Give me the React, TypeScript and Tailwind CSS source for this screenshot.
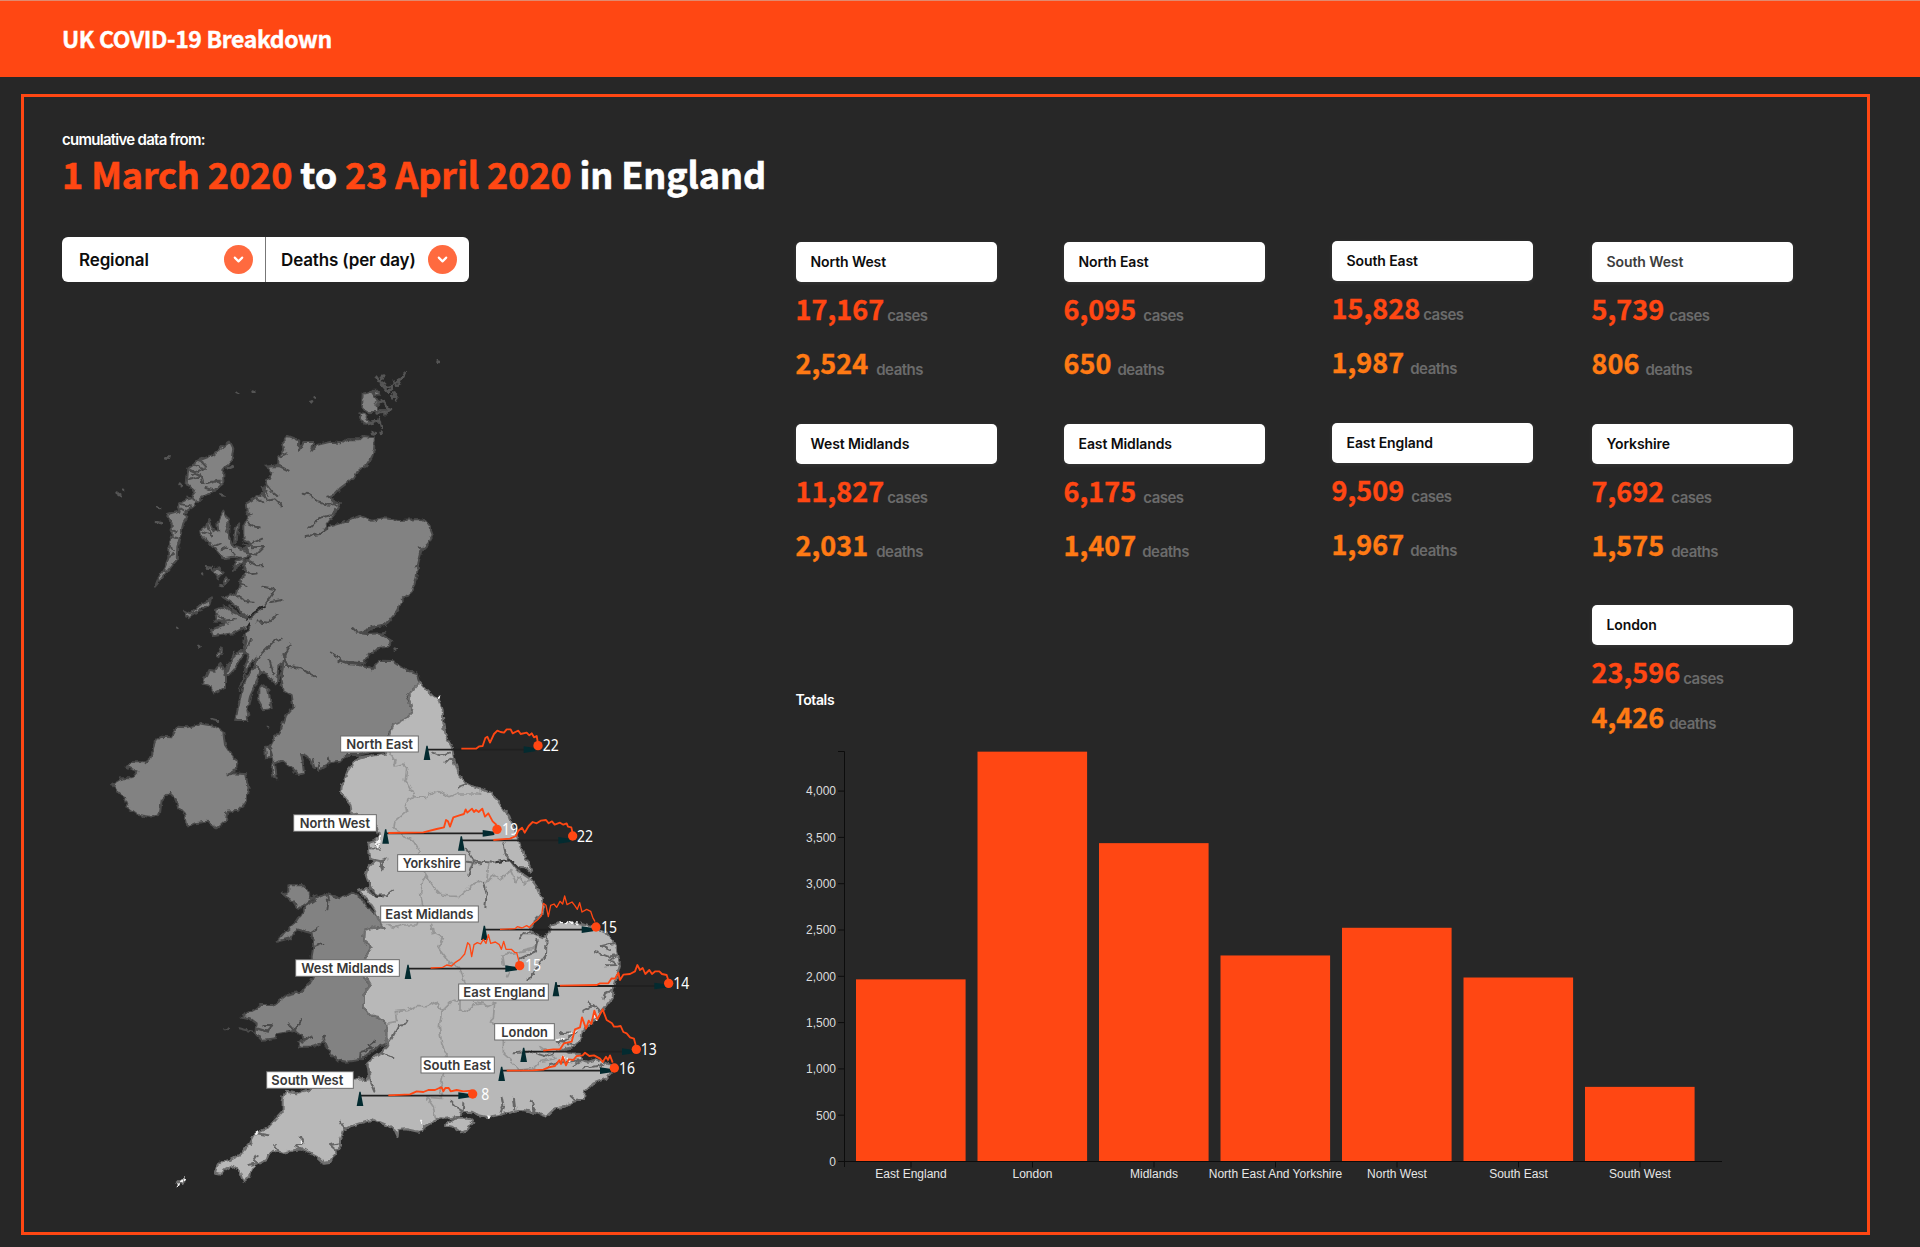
import React from "react";
import { ChevronDown } from "lucide-react";

/* ---------- map geometry: three drawing units to one pixel ---------- */

type Seg = [number, number, string];

function toPath(segments: Seg[], closed = true) {
  const out: string[] = [];
  for (const [dx, dy, text] of segments) {
    for (const pair of text.trim().split(/\s+/)) {
      const [x, y] = pair.split(",").map(Number);
      out.push(`${x + dx},${y + dy}`);
    }
  }
  return "M" + out.join("L") + (closed ? "Z" : "");
}

const scotland = toPath([
  [0, 0, "565,258 585,265 598,272 596,302 610,276 642,276 634,304 650,285 690,275 720,280 740,268 780,268 790,258 825,262 822,300 815,325 800,348 775,360 765,380 740,400 720,415 705,432 685,440 700,452 720,460 705,490 680,525 660,552 690,530 740,515 780,497 815,512 850,505 900,510 960,507 985,520 998,555 985,580 965,600 955,640 950,680 935,725 905,750 895,780 860,822 820,830 780,850 800,852 840,850 878,875 860,890"],
  [0, 750, "835,145 805,165 790,190 740,185 715,183 740,192 780,195 815,208 840,182 880,183 920,210 950,220 960,250 920,290 940,335 915,360 880,375 868,400 850,440 780,465 740,465 720,485 690,490 660,508 640,500 625,470 605,462 612,520 595,525 570,500 545,480 525,490 530,535 520,530 515,505 520,480 510,445 512,475 498,475 495,440 510,440 520,420 540,395 555,350 580,320 575,285 550,270 545,240 548,190 535,200 530,255 500,222 480,215 470,245 450,290 442,330 445,345 440,360 405,360 415,320 425,270 440,230 465,200 470,170 455,190 430,215 445,170 432,150 440,120"],
  [0, 0, "435,850 450,828 430,835 400,850 340,858 333,840 380,820 350,812 345,780 375,768 395,785 440,805 410,770 370,742 410,730 420,700 440,665 430,640 455,620 430,600 455,580 430,565 430,530 445,500 440,460 470,440 490,430 500,395 515,370 500,350 535,345 535,320 550,300 545,280"],
]);

const islands = [
  toPath([[0, 0, "370,482 385,510 385,560 400,590 440,600 455,612 430,625 400,620 370,625 350,600 325,580 303,555 300,540 318,530 325,510 340,540 355,545 352,520 360,500"]]),
  toPath([[0, 0, "390,275 400,295 395,330 370,360 370,400 340,425 310,440 280,470 250,490 262,500 250,520 240,560 232,590 230,630 205,660 190,680 165,710 175,685 195,650 205,625 205,590 215,560 215,520 200,495 235,485 240,460 270,445 285,425 260,400 265,355 300,330 340,315 370,290"]]),
  toPath([[0, 0, "338,660 355,652 368,670 355,685"]]),
  toPath([[0, 0, "370,692 378,682 384,692 374,704"]]),
  toPath([[0, 0, "398,660 410,632 438,622 425,640"]]),
  toPath([[0, 0, "252,782 270,790 300,765 333,745 325,770 290,785 262,803"]]),
  toPath([[0, 0, "402,580 408,530 418,520 410,570"]]),
  toPath([[0, 750, "307,250 325,210 345,212 360,190 378,220 378,262 342,280 335,262 315,256"]]),
  toPath([[0, 750, "373,225 385,190 425,150 435,155 402,210 385,228"]]),
  toPath([[0, 750, "350,168 362,145 368,148 358,172"]]),
  toPath([[0, 750, "475,265 490,256 505,270 515,325 490,328 475,300"]]),
  toPath([[0, 0, "788,132 815,125 832,150 835,185 800,187 786,170"]]),
  toPath([[0, 0, "778,190 795,195 812,218 795,225 782,205"]]),
  toPath([[0, 0, "818,122 835,122 838,134 826,132"]]),
  toPath([[0, 0, "842,180 858,180 862,192 850,194"]]),
];

const islets = [
  "M828,80l12,16l10,-22M836,92l16,10M880,95l14,12l20,-38M884,100l14,-12M846,104l20,24l12,-20M858,112l14,-4M880,130l12,14l-4,10M874,142l14,-4M842,150l14,10l10,22l10,-8M828,160l24,-4M830,190l30,-4M836,205l8,28M828,214l12,0M800,222l26,-6M815,248l10,2M842,248l3,1",
  "M1010,34l8,2M410,126l5,2M455,122l5,2M644,141l2,2M631,156l2,1M196,322l12,1M50,428l14,10M70,418l2,2M172,472l8,2M168,516l18,4M238,404l6,2M362,434l8,2M386,354l14,-6M230,834l2,2M295,888l3,2M362,706l6,2M304,671l2,1M318,652l18,2",
  "M335,1108l16,4M504,1128l3,1M884,896l3,2",
];

const lochs = [
  "M608,428l24,6l20,22l34,8l20,-2M720,460l-24,34l-38,10l-30,30M620,558l40,-6M690,440l16,24",
  "M490,710l38,8l-34,48l-44,40l-48,-22l-14,-18M545,750l-32,6M530,792l-24,26l-36,-4",
  "M758,834l14,14l30,-2l24,-16l34,-6M838,852l18,-4",
  "M692,908l24,14l10,14l34,2M648,980l-50,-26l-40,-8M545,866l-26,10l-34,34l-16,30l14,30M572,884l-18,30l-8,50l-16,34M550,912l14,40M508,930l12,40",
  "M430,580l26,12l30,-2M430,604l40,10l20,-20M440,630l30,16l20,0M430,655l24,20l16,-2M455,580l32,-14M445,520l20,10l14,2M470,445l20,14M486,432l18,20l20,-4l20,18M496,400l20,26l16,12M488,410l16,24M504,350l34,-2l28,14M536,322l24,-12M440,490l18,2M410,735l24,18l28,2M420,700l20,8",
  "M440,840l-10,50M452,870l-14,28M404,905l-22,60M440,960l-24,60M350,790l24,22l34,-4M345,815l36,-2M966,600l-8,-8M950,650l4,6M603,1212l6,22M640,1230l6,24M660,1236l-6,24M686,1222l4,18",
  "M270,360l30,14l8,26M264,390l36,-10M284,345l34,12M276,372l34,-16M320,400l30,-10l14,14M316,414l30,8M330,392l32,0M300,330l18,20M250,480l-16,-10M244,462l30,8M262,440l26,12M216,540l14,6M212,560l20,4M208,590l14,10M206,618l16,-6M190,662l16,4M322,520l14,40M310,545l26,12M340,590l22,-10M365,600l18,-8M386,525l-8,20M390,600l14,14",
];

const ireland = toPath([
  [0, 750, "36,552 65,535 95,535 112,515 80,500 95,487 135,487 155,470 165,420 185,410 215,412 232,380 260,382 300,370 345,378 370,395 375,435 395,465 413,490 405,510 380,527 398,520 435,522 447,570 440,605 415,632 382,635 378,660 350,685 320,665 285,670 262,680 255,640 235,620 225,595 208,578 185,600 180,640 150,650 115,645 80,620 75,595 55,580"],
]);

const wales = toPath([
  [180, 1530, "420,170 440,135 470,115 500,102 540,115 580,97 600,110 620,140 645,160 665,185 672,207 640,203 612,210 610,240 635,260 615,295 610,340 630,375 612,400 612,440 630,465 660,472 680,490 680,550 640,570 600,600 560,605 530,600 510,580 495,545 460,560 420,560 415,545 440,540 400,510 350,520 345,535 305,540 285,520 290,490 270,475 245,470 290,445 300,435 340,435 380,405 420,395 450,370 460,345 455,290 460,260 455,220 410,208 390,235 350,245 375,215 410,185"],
]);

const anglesey = toPath([
  [180, 1530, "368,102 385,95 385,76 430,75 445,95 450,112 470,106 440,130 415,148 400,125 385,115"],
]);

const england = toPath([
  [480, 990, "481,6 500,30 520,50 540,62 548,90 550,130 558,170 575,200 583,240 597,285 620,312 660,325 690,338 712,360 728,385 748,408 760,440 775,480 790,520 805,545 817,572 808,575 795,562 770,560 750,540 770,570 800,590 815,600 830,620 843,650 852,680 848,700 825,722 812,750"],
  [900, 1470, "392,262 400,280 430,292 445,280 452,258 480,248 540,250 580,262 620,280 645,310 655,345 660,375 650,410 640,450 638,475 615,505 595,530 570,552 545,575 540,600 515,622"],
  [1020, 1950, "370,148 395,160 420,162 425,180 445,185 470,178 500,190 515,196 520,208 500,235 460,250 435,275 432,298 400,305 375,320 345,325 318,350 290,340 250,330 200,340 145,352 115,345 95,335 68,337 55,350 20,356"],
  [180, 1530, "840,775 820,785 795,800 790,812 775,815 740,808 715,810 713,830 705,812 680,795 640,778 600,790 570,800 550,810 540,840 540,860 525,880 512,905 490,908 470,890 450,880 430,868 405,870 370,878 340,872 325,885 320,900 290,915 275,925 270,950 250,965 240,935 215,918 195,930 185,942 165,938 172,915 190,903 210,900 240,885 255,865 270,850 285,822 325,802 340,785 368,755 368,720 375,695 410,700 440,690 480,680 540,672 600,655 618,660 632,640 622,615 635,595 665,575 680,560 680,525 680,490 660,472 630,465 612,440 612,400 630,375 610,340 615,295 635,260 610,240 612,210 640,203 672,207 655,180 645,150 625,120 597,92 620,84 640,108 630,80 617,45"],
  [480, 990, "325,560 345,540 330,535 325,485 345,480 358,470 350,440 330,410 300,405 275,398 270,370 243,340 245,320 265,270 285,240 330,228 375,222 388,200 388,165 400,135 440,115 460,95 443,50"],
]);

const wight = toPath([[1020, 1950, "15,375 45,356 88,356 100,368 80,392 62,397 40,380"]]);

const borders = [
  toPath([[480, 990, "388,215 405,240 402,258 432,252 440,268 436,300 447,318 462,350 500,352 508,344 535,335 570,350 590,342 662,342 660,325"]], false),
  toPath([[480, 990, "462,350 435,368 440,395 405,425 402,445 418,455 440,475 460,480 480,515 470,540 500,590 520,620 545,645 570,648 600,650 620,632 650,605 680,605 700,585 720,600 752,572 768,608 778,590 795,612 815,590"]], false),
  toPath([[480, 990, "500,590 488,600 482,640 490,690 470,735 430,735 405,742 380,735"]], false),
  toPath([[480, 990, "680,605 686,555 690,545"]], false),
  toPath([[180, 1530, "815,190 820,220 850,235 835,262 870,308 900,325 915,370 900,400 900,450 920,455 940,435 965,432"]], false),
  toPath([[180, 1530, "680,490 710,484 706,455 740,452 760,440 800,440 830,425 845,455 880,420 900,425"]], false),
  toPath([[180, 1530, "845,455 838,500 845,550 860,590 850,640 840,690 848,715 800,712 820,740 826,775"]], false),
  toPath([[900, 1470, "220,485 250,490 262,500 284,490 280,535 270,545 300,560 310,600 310,640 345,672 355,690 400,685 420,665 465,655 450,640 420,620"]], false),
  toPath([[900, 1470, "415,300 400,325 360,335 305,345 310,375 330,385 320,410"]], false),
];

const rivers = [
  toPath([[480, 990, "617,505 640,540 665,545 700,548 750,540 775,565"]], false),
  toPath([[480, 990, "640,545 625,585"]], false),
  toPath([[480, 990, "620,545 660,550"]], false),
  toPath([[480, 990, "730,490 738,525 755,545"]], false),
  toPath([[480, 990, "672,608 680,640 676,684"]], false),
  toPath([[480, 990, "517,218 540,226 570,218"]], false),
  toPath([[480, 990, "555,248 568,236 582,238"]], false),
  toPath([[480, 990, "620,312 598,320 592,326"]], false),
  toPath([[480, 990, "285,240 300,232 335,226"]], false),
  toPath([[480, 990, "328,610 345,648 380,645 397,632"]], false),
  toPath([[480, 990, "345,540 370,545 368,568 358,545 382,538"]], false),
  toPath([[480, 990, "330,505 358,506 350,492"]], false),
  toPath([[900, 1470, "400,280 370,280 358,298"]], false),
  toPath([[900, 1470, "440,290 438,345 400,400 385,418"]], false),
  toPath([[900, 1470, "412,300 405,335 360,356"]], false),
  toPath([[900, 1470, "585,335 625,350 652,345 630,360 650,375 615,376"]], false),
  toPath([[900, 1470, "640,310 605,318 630,330"]], false),
  toPath([[900, 1470, "550,512 580,495 600,515 565,485"]], false),
  toPath([[900, 1470, "635,450 615,460 610,480"]], false),
  toPath([[900, 1470, "480,580 530,575 500,600 470,605 520,612"]], false),
  toPath([[900, 1470, "340,640 390,635 440,650 475,632 510,628"]], false),
  toPath([[900, 1470, "450,675 500,665 545,660 520,678"]], false),
  toPath([[900, 1470, "550,685 610,675"]], false),
  toPath([[180, 1530, "745,482 735,495 715,498 690,545 665,578 697,594"]], false),
  toPath([[180, 1530, "622,615 630,665 643,695"]], false),
  toPath([[180, 1530, "540,782 552,805 575,795"]], false),
  toPath([[180, 1530, "540,850 510,855 530,872"]], false),
  toPath([[180, 1530, "422,830 430,850 405,858 425,870"]], false),
  toPath([[180, 1530, "290,885 280,900 295,910 265,915"]], false),
  toPath([[180, 1530, "290,820 325,826"]], false),
  toPath([[180, 1530, "345,855 355,872"]], false),
  toPath([[1020, 1950, "30,305 50,325 68,335 70,310"]], false),
  toPath([[1020, 1950, "62,345 15,374"]], false),
  toPath([[1020, 1950, "185,290 190,315 182,338"]], false),
  toPath([[1020, 1950, "222,296 226,328"]], false),
  toPath([[1020, 1950, "275,305 282,325 278,338 298,342"]], false),
  toPath([[1020, 1950, "392,288 405,300 430,298"]], false),
];

const welshInlets = [
  toPath([[180, 1530, "500,102 505,125 502,148"]], false),
  toPath([[180, 1530, "455,215 475,202"]], false),
  toPath([[180, 1530, "458,262 487,250"]], false),
  toPath([[180, 1530, "385,490 405,512 425,480"]], false),
  toPath([[180, 1530, "290,505 325,515 335,495 310,495"]], false),
  toPath([[180, 1530, "600,600 602,575 640,565 628,555 645,542"]], false),
  toPath([[180, 1530, "430,545 455,530"]], false),
  toPath([[180, 1530, "195,508 202,508"]], false),
  toPath([[180, 1530, "238,505 280,515"]], false),
  toPath([[180, 1530, "485,545 495,530"]], false),
];

const shoals = [
  toPath([[900, 1470, "480,247 500,250 515,247 540,252"]], false),
  toPath([[480, 990, "536,54 545,46"]], false),
  toPath([[480, 990, "350,490 358,470 352,510"]], false),
  toPath([[900, 1470, "470,600 485,596 500,598"]], false),
  toPath([[900, 1470, "510,582 530,572"]], false),
  toPath([[900, 1470, "488,652 510,662"]], false),
  toPath([[900, 1470, "582,525 590,540"]], false),
  toPath([[180, 1530, "50,978 60,965 75,955"]], false),
  toPath([[180, 1530, "422,842 428,850"]], false),
  toPath([[180, 1530, "288,822 294,816"]], false),
  toPath([[180, 1530, "780,782 786,790"]], false),
  toPath([[1020, 1950, "145,348 150,354"]], false),
];

type Trend = {
  name: string;
  value: string;
  origin: [number, number];
  box: [number, number, number, number];
  text: [number, number];
  axis: [number, number, number];
  dotY: number;
  valueX: number;
  line: string;
  thin?: boolean;
};

const trends: Trend[] = [
  { name: "North East", value: "22", origin: [480, 990], box: [241, 167, 235, 50], text: [259, 200], axis: [501, 834, 209], dotY: 197, valueX: 848, line: "604,206 648,206 658,199 668,198 676,174 682,170 690,188 702,162 712,152 722,156 732,158 740,148 752,148 758,160 766,156 775,152 782,162 800,158 808,166 815,160 822,172 830,168 834,190" },
  { name: "North West", value: "19", origin: [480, 990], box: [100, 403, 250, 52], text: [119, 211], axis: [377, 711, 460], dotY: 448, valueX: 726, line: "385,459 490,457 530,447 552,442 558,420 564,424 570,440 580,412 598,406 612,402 617,388 622,398 636,386 642,396 648,390 656,396 667,386 675,410 685,400 698,424 710,435" },
  { name: "Yorkshire", value: "22", origin: [480, 990], box: [412, 523, 205, 52], text: [428, 174], axis: [604, 938, 481], dotY: 468, valueX: 951, line: "700,480 750,476 768,468 775,452 786,443 794,458 806,438 818,426 830,430 842,422 858,420 866,430 876,424 884,434 900,428 910,434 920,430 924,440 934,442 938,460" },
  { name: "East Midlands", value: "15", origin: [900, 1470], box: [-59, 197, 295, 50], text: [-44, 264], axis: [253, 588, 269], dotY: 261, valueX: 603, line: "300,268 345,266 352,260 366,264 380,257 388,262 400,250 412,240 425,225 430,190 438,196 445,230 452,196 462,192 470,202 480,184 488,192 494,168 501,194 516,186 524,196 532,208 539,188 546,216 560,208 572,214 578,232 585,245", thin: true },
  { name: "West Midlands", value: "15", origin: [900, 1470], box: [-314, 358, 313, 52], text: [-296, 277], axis: [24, 359, 386], dotY: 377, valueX: 375, line: "92,384 128,382 140,375 155,378 165,368 180,358 194,342 203,308 209,314 215,350 222,314 232,308 242,312 250,298 258,310 265,284 272,310 286,306 298,314 304,328 311,304 318,328 334,328 345,338 350,338 358,368", thin: true },
  { name: "East England", value: "14", origin: [900, 1470], box: [175, 431, 271, 50], text: [190, 246], axis: [468, 806, 438], dotY: 430, valueX: 820, line: "480,437 590,435 600,430 625,430 635,415 645,416 655,398 660,420 670,404 690,402 705,394 712,375 720,390 728,384 736,402 748,390 756,402 766,394 778,394 786,402 800,405 804,418" },
  { name: "London", value: "13", origin: [900, 1470], box: [283, 550, 181, 51], text: [304, 140], axis: [371, 709, 635], dotY: 628, valueX: 722, line: "430,632 460,628 480,628 492,610 515,605 525,568 540,562 546,532 558,566 566,542 574,552 583,512 592,538 608,508 620,540 636,550 642,560 652,560 662,558 670,576 680,580 690,592 702,596 707,615" },
  { name: "South East", value: "16", origin: [900, 1470], box: [62, 650, 222, 50], text: [69, 204], axis: [305, 643, 692], dotY: 684, valueX: 657, line: "320,692 400,691 430,689 446,682 465,678 478,660 483,672 488,650 498,676 506,658 520,660 530,648 548,646 555,638 568,648 582,646 600,656 608,666 618,650 624,660 630,646 638,668" },
  { name: "South West", value: "8", origin: [180, 1530], box: [319, 634, 262, 52], text: [334, 216], axis: [600, 938, 707], dotY: 702, valueX: 964, line: "685,706 750,703 770,694 790,696 805,690 825,690 838,684 845,682 850,694 856,684 866,684 872,694 890,690 910,694 935,692" },
];

function TrendLine({ t }: { t: Trend }) {
  const [x1, x2, y] = t.axis;
  const pts = t.line.split(" ").join("L");
  return (
    <g transform={`translate(${t.origin[0]} ${t.origin[1]})`}>
      <path d={`M${x1},${y}H${x2 - 20}`} stroke="#202020" strokeWidth="5.5" fill="none" />
      <path d={`M${x2 - 43},${y - 10}L${x2 - 8},${y - 5}V${y + 5}L${x2 - 43},${y + 10}Z`} fill="#032b30" />
      <path d={`M${x1 - 2},${y - 12}h4l8,43h-20Z`} fill="#032b30" />
      <path d={`M${pts}`} fill="none" stroke="#ff4713" strokeWidth={t.thin ? 4 : 5.5} strokeLinejoin="round" />
      <circle cx={x2} cy={t.dotY} r="14" fill="#ff4713" />
      <text x={t.valueX} y={t.dotY + 17} fontSize="46" fill="#fff" className="font-['Noto_Sans']" textLength={t.value.length * 24} lengthAdjust="spacingAndGlyphs">
        {t.value}
      </text>
    </g>
  );
}

function TrendLabel({ t }: { t: Trend }) {
  const [x, y, w, h] = t.box;
  return (
    <g transform={`translate(${t.origin[0]} ${t.origin[1]})`}>
      <rect x={x + 1} y={y + 1} width={w - 2} height={h - 2} fill="#fff" stroke="#6b6b6b" strokeWidth="3" />
      <text x={t.text[0]} y={y + 40} fontSize="41" fill="#383838" className="font-['Inter'] font-semibold" textLength={t.text[1]} lengthAdjust="spacingAndGlyphs">
        {t.name}
      </text>
    </g>
  );
}

function RegionMap() {
  return (
    <svg viewBox="0 0 1800 2550" className="ml-[38px] mt-[68px] block h-[850px] w-[600px] shrink-0">
      <defs>
        <filter id="coast" x="-2%" y="-2%" width="104%" height="104%" colorInterpolationFilters="sRGB">
          <feTurbulence type="fractalNoise" baseFrequency="0.06" numOctaves="2" seed="4" result="n" />
          <feDisplacementMap in="SourceGraphic" in2="n" scale="15" xChannelSelector="R" yChannelSelector="G" />
        </filter>
      </defs>
      <g filter="url(#coast)" strokeLinejoin="round" strokeLinecap="round" strokeWidth="6">
        <g fill="#828282" stroke="#4a4a4a">
          <path d={scotland} />
          {islands.map((d) => <path key={d} d={d} />)}
          <path d={ireland} />
          <path d={wales} />
          <path d={anglesey} />
        </g>
        <g fill="none" stroke="#4c4c4c">
          {lochs.map((d) => <path key={d} d={d} />)}
          {welshInlets.map((d) => <path key={d} d={d} />)}
        </g>
        <g fill="none" stroke="#555" strokeWidth="8">
          {islets.map((d) => <path key={d} d={d} />)}
        </g>
        <path d="M440,812L460,790L490,770M432,850L450,820" fill="none" stroke="#272727" strokeWidth="6" />
        <g fill="#b8b8b8" stroke="#6f6f6f">
          <path d={england} />
          <path d={wight} />
          <path d="M232,2498l8,-8l16,0l-8,12z" />
        </g>
        <g fill="none" stroke="#969696" strokeWidth="5">
          {borders.map((d) => <path key={d} d={d} />)}
        </g>
        <g fill="none" stroke="#666">
          {rivers.map((d) => <path key={d} d={d} />)}
        </g>
        <path d="M1190,1536L1230,1530L1256,1556M812,1622L828,1640L848,1640" fill="none" stroke="#3a3a3a" strokeWidth="6" />
        <g fill="none" stroke="#f4f4f4" strokeWidth="6" strokeDasharray="6 10">
          {shoals.map((d) => <path key={d} d={d} />)}
        </g>
      </g>
      {trends.map((t) => <TrendLine key={t.name} t={t} />)}
      {trends.map((t) => <TrendLabel key={t.name} t={t} />)}
    </svg>
  );
}

/* ---------- figures ---------- */

type Region = {
  name: string;
  cases: string;
  deaths: string;
  casesGap: string;
  deathsGap: string;
  soft?: boolean;
  tight?: boolean;
};

const columns: { box: string; items: Region[] }[] = [
  { box: "w-[268px] pt-[5px]", items: [
    { name: "North West", cases: "17,167", deaths: "2,524", casesGap: "ml-[3px]", deathsGap: "ml-[8px]" },
    { name: "West Midlands", cases: "11,827", deaths: "2,031", casesGap: "ml-[3px]", deathsGap: "ml-[8px]" },
  ] },
  { box: "w-[268px] pt-[5px]", items: [
    { name: "North East", cases: "6,095", deaths: "650", casesGap: "ml-[7px]", deathsGap: "ml-[6px]" },
    { name: "East Midlands", cases: "6,175", deaths: "1,407", casesGap: "ml-[7px]", deathsGap: "ml-[6px]" },
  ] },
  { box: "w-[260px] pt-[4px]", items: [
    { name: "South East", cases: "15,828", deaths: "1,987", casesGap: "ml-[3px]", deathsGap: "ml-[6px]" },
    { name: "East England", cases: "9,509", deaths: "1,967", casesGap: "ml-[7px]", deathsGap: "ml-[6px]" },
  ] },
  { box: "w-[202px] pt-[5px]", items: [
    { name: "South West", cases: "5,739", deaths: "806", casesGap: "ml-[5px]", deathsGap: "ml-[6px]", soft: true },
    { name: "Yorkshire", cases: "7,692", deaths: "1,575", casesGap: "ml-[7px]", deathsGap: "ml-[7px]" },
    { name: "London", cases: "23,596", deaths: "4,426", casesGap: "ml-[3px]", deathsGap: "ml-[5px]", tight: true },
  ] },
];

function Figure({ value, unit, gap, tone }: { value: string; unit: string; gap: string; tone: string }) {
  return (
    <div className="flex h-[36px] items-start leading-[36px]">
      <span className={`font-['Noto_Sans_CJK_SC'] text-[27px] font-bold tracking-[0.05px] [-webkit-text-stroke:0.4px_currentColor] ${tone}`}>{value}</span>
      <span className={`mt-[7px] font-['Inter'] text-[15px] font-semibold tracking-[-0.5px] text-[#6b6b6b] ${gap}`}>{unit}</span>
    </div>
  );
}

function RegionCard({ r }: { r: Region }) {
  return (
    <div className="h-[181.7px]">
      <div className={`flex h-[40px] w-[201px] items-center rounded-[5px] bg-white pb-px pl-[15px] font-['Inter'] text-[14px] font-semibold tracking-[-0.1px] shadow-[0_1px_4px_rgba(255,255,255,0.08)] ${r.soft ? "text-[#3d3d3d]" : "text-[#0d0d0d]"}`}>
        {r.name}
      </div>
      <div className="mt-[9px]">
        <Figure value={r.cases} unit="cases" gap={r.casesGap} tone="text-[#ff4713]" />
      </div>
      <div className={r.tight ? "mt-[9px]" : "mt-[18px]"}>
        <Figure value={r.deaths} unit="deaths" gap={r.deathsGap} tone="text-[#ff7a14]" />
      </div>
    </div>
  );
}

/* ---------- bar chart ---------- */

const bars = [
  { name: "East England", value: 1967 },
  { name: "London", value: 4426 },
  { name: "Midlands", value: 3438 },
  { name: "North East And Yorkshire", value: 2225 },
  { name: "North West", value: 2524 },
  { name: "South East", value: 1987 },
  { name: "South West", value: 806 },
];
const ticks = [0, 500, 1000, 1500, 2000, 2500, 3000, 3500, 4000];
const yOf = (v: number) => 421.5 - v * 0.0926;

function TotalsChart() {
  return (
    <svg width="940" height="450" className="block font-['Liberation_Sans'] text-[12px]">
      {bars.map((b, i) => (
        <g key={b.name}>
          <rect x={60 + i * 121.5} y={yOf(b.value)} width="109.6" height={421.5 - yOf(b.value)} fill="#ff4713" />
          <path d={`M${115 + i * 121.5},421.5v6`} stroke="#0c0c0c" />
          <text x={115 + i * 121.5} y="438" textAnchor="middle" fill="#e6e6e6">{b.name}</text>
        </g>
      ))}
      {ticks.map((v) => (
        <g key={v}>
          <path d={`M42,${yOf(v)}h6`} stroke="#0c0c0c" />
          <text x="40" y={yOf(v) + 4.3} textAnchor="end" fill="#dcdcdc">{v.toLocaleString("en-GB")}</text>
        </g>
      ))}
      <path d="M42,11.5h6.5V427" fill="none" stroke="#0c0c0c" />
      <path d="M42,421.5H926" fill="none" stroke="#0c0c0c" />
    </svg>
  );
}

function Picker({ label, className }: { label: string; className: string }) {
  return (
    <button className={`flex h-full items-center justify-between ${className}`}>
      <span className="pt-[2px]">{label}</span>
      <span className="flex h-[29px] w-[29px] items-center justify-center rounded-full bg-[#ff6a3f] text-white">
        <ChevronDown size={15} strokeWidth={3.4} />
      </span>
    </button>
  );
}

export default function App() {
  return (
    <div className="h-[1247px] w-[1920px] overflow-hidden bg-[#272727]">
      <header className="flex h-[77px] items-center border-t border-[#e08a70] bg-[#ff4713] pb-[2px] pl-[62px]">
        <h1 className="font-['Noto_Sans_CJK_SC'] text-[23px] font-bold tracking-[-0.38px] text-white [-webkit-text-stroke:0.4px_currentColor]">UK COVID-19 Breakdown</h1>
      </header>

      <main className="ml-[21px] mt-[17px] h-[1141px] w-[1849px] border-[3px] border-[#ff4713] pl-[38px]">
        <p className="mt-[33px] h-[20px] font-['Inter'] text-[15px] font-semibold leading-[20px] tracking-[-0.73px] text-white">cumulative data from:</p>
        <h2 className="-mt-[2px] h-[50px] whitespace-nowrap font-['Noto_Sans_CJK_SC'] text-[36px] font-bold leading-[50px] tracking-[-0.13px] text-white [-webkit-text-stroke:0.6px_currentColor]">
          <span className="text-[#ff4713]">1 March 2020</span> to <span className="text-[#ff4713]">23 April 2020</span> in England
        </h2>

        <div className="mt-[39px] flex">
          <section className="w-[733.5px] shrink-0">
            <div className="flex h-[45px] w-[407px] rounded-[6px] bg-white font-['Inter'] text-[17px] font-semibold tracking-[-0.15px] text-[#0d0d0d]">
              <Picker label="Regional" className="w-[204px] border-r border-[#777] pl-[17px] pr-[12px]" />
              <Picker label="Deaths (per day)" className="w-[203px] pl-[15px] pr-[12px]" />
            </div>
            <RegionMap />
          </section>

          <section className="w-[1060px] shrink-0">
            <div className="flex h-[450px]">
              {columns.map((c) => (
                <div key={c.items[0].name} className={c.box}>
                  {c.items.map((r) => <RegionCard key={r.name} r={r} />)}
                </div>
              ))}
            </div>
            <h3 className="h-[26px] font-['Inter'] text-[14px] font-semibold leading-[26px] tracking-[-0.4px] text-white">Totals</h3>
            <div className="mt-[27px]">
              <TotalsChart />
            </div>
          </section>
        </div>
      </main>
    </div>
  );
}
